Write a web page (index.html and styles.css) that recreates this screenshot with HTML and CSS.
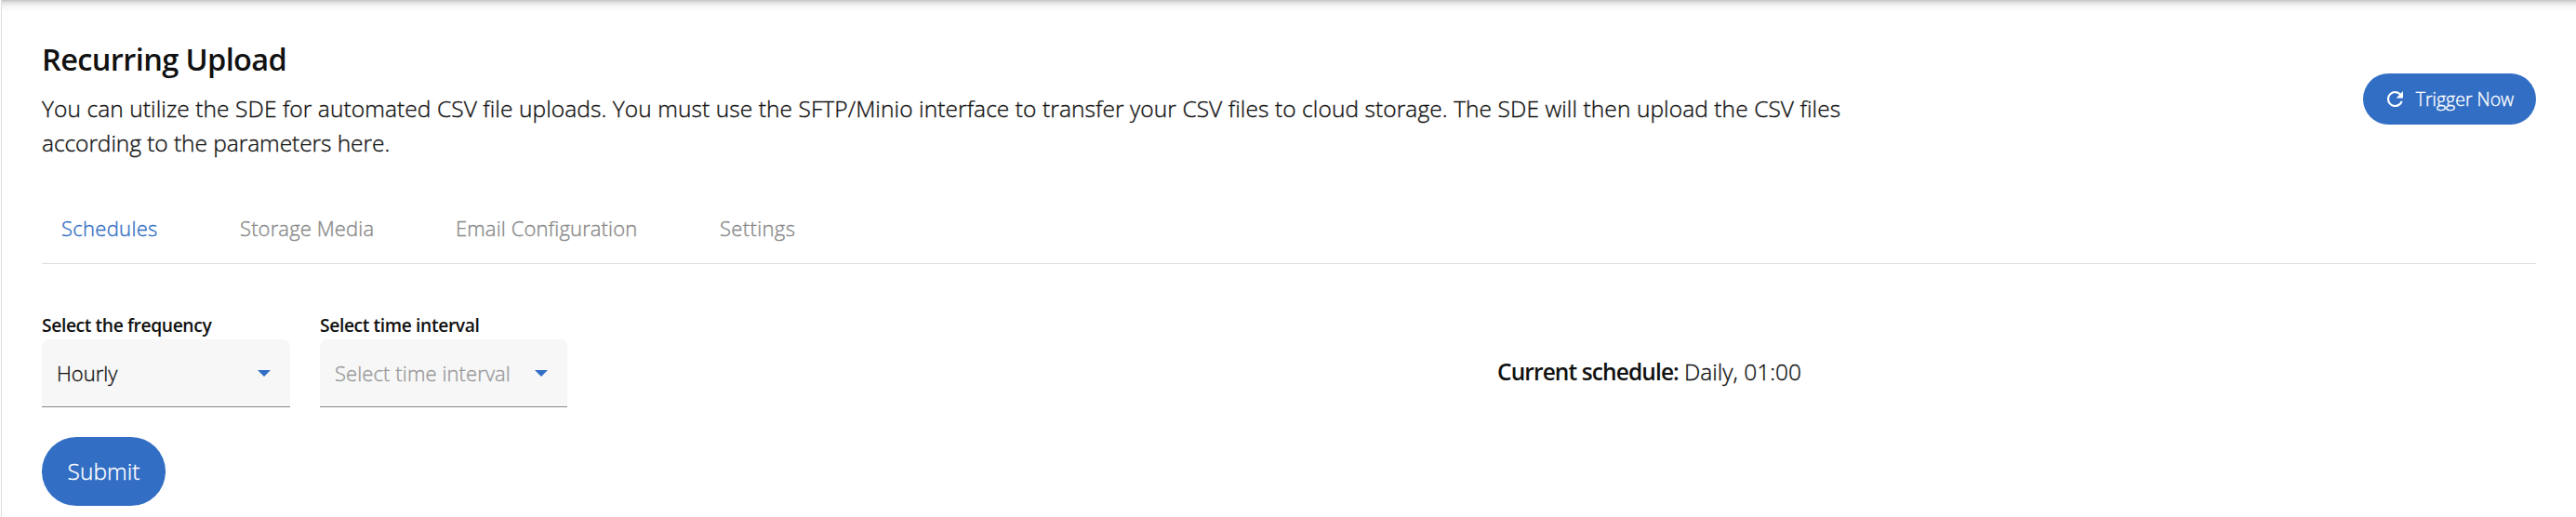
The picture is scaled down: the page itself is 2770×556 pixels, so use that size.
FILE: index.html
```html
<!DOCTYPE html>
<html lang="en">
<head>
<meta charset="utf-8">
<title>Recurring Upload</title>
<link rel="stylesheet" href="styles.css">
</head>
<body>
<main class="page">
  <header class="header">
    <div class="intro">
      <h1 class="title">Recurring Upload</h1>
      <p class="desc">You can utilize the SDE for automated CSV file uploads. You must use the SFTP/Minio interface to transfer your CSV files to cloud storage. The SDE will then upload the CSV files<br><span class="desc-end">according to the parameters here.</span></p>
    </div>
    <button class="btn trigger"><svg class="refresh" viewBox="4 4 16 16"><path fill="currentColor" d="M17.65 6.35A7.96 7.96 0 0 0 12 4a8 8 0 1 0 7.73 10h-2.08A6 6 0 1 1 12 6c1.66 0 3.14.69 4.22 1.78L13 11h7V4z"/></svg><span>Trigger Now</span></button>
  </header>
  <nav class="tabs">
    <a class="tab tab-active">Schedules</a>
    <a class="tab tab-storage">Storage Media</a>
    <a class="tab tab-email">Email Configuration</a>
    <a class="tab tab-settings">Settings</a>
  </nav>
  <section class="form">
    <div class="field">
      <label class="label">Select the frequency</label>
      <div class="select"><span class="value">Hourly</span><i class="caret"></i></div>
    </div>
    <div class="field field-interval">
      <label class="label">Select time interval</label>
      <div class="select"><span class="placeholder">Select time interval</span><i class="caret"></i></div>
    </div>
    <p class="schedule"><strong>Current schedule:</strong><span class="when">Daily, 01:00</span></p>
  </section>
  <button class="btn submit">Submit</button>
</main>
</body>
</html>
```

FILE: styles.css
```css
* { box-sizing: border-box; }
body {
  margin: 0;
  background: #fff;
  color: #111;
  font-family: "Open Sans", sans-serif;
  font-weight: 300;
  -webkit-text-stroke: .35px currentColor;
}
h1, p { margin: 0; }
h1, strong, label { -webkit-text-stroke: 0; }
.page {
  height: 556px;
  margin-left: 1px;
  padding: 42px 43px 0 43px;
  border-left: 1px solid #ddd;
  background: linear-gradient(#c4c4c4, #e4e4e4 3px, #f6f6f6 7px, #fff 13px);
  overflow: hidden;
}
.header { display: flex; justify-content: space-between; height: 176px; }
.title { font-size: 32.5px; line-height: 43px; font-weight: 600; letter-spacing: -.6px; }
.desc { margin-top: 13px; font-size: 24.5px; line-height: 37px; letter-spacing: .08px; white-space: nowrap; }
.desc-end { letter-spacing: -.06px; }
.btn {
  display: flex;
  align-items: center;
  justify-content: center;
  padding: 0;
  border: 0;
  background: #326ec4;
  color: #fff;
  font-family: inherit;
  font-weight: 300;
}
.trigger { gap: 14px; width: 186px; height: 55px; margin-top: 37px; padding-left: 2px; border-radius: 28px; font-size: 19.5px; }
.refresh { width: 17px; height: 17px; }
.tabs { display: flex; height: 66px; padding-left: 21px; border-bottom: 1px solid #ddd; font-size: 22px; line-height: 54px; letter-spacing: .13px; color: #888; }
.tab { width: 192px; }
.tab-active { color: #326ec4; letter-spacing: .3px; }
.tab-storage { width: 232px; }
.tab-email { width: 284px; }
.tab-settings { letter-spacing: .35px; }
.form { display: flex; height: 186px; padding-top: 52px; }
.field { width: 267px; }
.field-interval { width: 266px; margin-left: 32px; }
.label { display: block; height: 29px; line-height: 28px; font-size: 19.3px; font-weight: 600; letter-spacing: -.4px; }
.select {
  display: flex;
  align-items: center;
  justify-content: space-between;
  height: 73px;
  padding: 0 21px 0 16px;
  border-bottom: 1px solid #888;
  border-radius: 8px 8px 0 0;
  background: #f7f7f7;
  font-size: 22px;
}
.placeholder { color: #999; letter-spacing: .1px; }
.caret { border: 7px solid transparent; border-top-color: #326ec4; border-bottom: 0; }
.schedule { margin: 46px 0 0 1000px; font-size: 24.5px; line-height: 36px; white-space: nowrap; }
.schedule strong { font-weight: 600; letter-spacing: -.9px; }
.when { margin-left: 6px; }
.submit { width: 133px; height: 74px; padding-bottom: 2px; border-radius: 37px; font-size: 24.5px; }
```
